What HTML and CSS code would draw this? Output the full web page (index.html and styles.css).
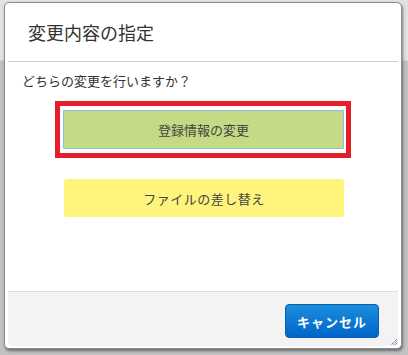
FILE: index.html
```html
<html>

<head>
    <title>変更内容の指定</title>
    <link rel="stylesheet" href="styles.css">
</head>

<body>
    <div class="dialog">
        <div class="dialog-header">
            <h1>変更内容の指定</h1>
        </div>

        <div class="dialog-body">
            <p class="question">どちらの変更を行いますか？</p>
            <div class="highlight">
                <button class="choice choice-info">登録情報の変更</button>
            </div>
            <button class="choice choice-file">ファイルの差し替え</button>
        </div>

        <div class="dialog-footer">
            <button class="btn-cancel">キャンセル</button>
        </div>

        <!-- resize grip -->
        <svg class="grip" width="7" height="7" viewBox="0 0 7 7">
            <path d="M6 0 L0 6 M6 2 L2 6 M6 4 L4 6" stroke="#2d5ea6" stroke-width="1" stroke-dasharray="1 1" />
        </svg>
    </div>
</body>

</html>
```

FILE: styles.css
```css
body {
    margin: 0;
    padding: 2px 0 0 4px;
    height: 355px;
    box-sizing: border-box;
    overflow: hidden;
    background: linear-gradient(#e2e2e2 0, #e2e2e2 60px, #c2c2c2 61px);
    font-family: 'Noto Sans CJK JP', 'Noto Sans', sans-serif;
    color: #333;
}

.dialog {
    position: relative;
    width: 398px;
    height: 347px;
    box-sizing: border-box;
    padding: 0 3px 2px 3px;
    background: #fff;
    border: 1px solid #8c8c8c;
    border-radius: 5px;
    box-shadow: 1px 2px 3px rgba(0, 0, 0, 0.45);
    display: flex;
    flex-direction: column;
}

.dialog-header {
    height: 59px;
    border-bottom: 1px solid #cfcfcf;
    padding: 1px 0 0 20px;
    box-sizing: border-box;
}

.dialog-header h1 {
    margin: 0;
    font-size: 18px;
    font-weight: normal;
    line-height: 57px;
    color: #333;
}

.dialog-body {
    flex: 1;
    display: flex;
    flex-direction: column;
    align-items: flex-start;
}

.question {
    margin: 11px 0 0 14px;
    font-size: 13px;
    line-height: 16px;
}

.highlight {
    margin: 12px 0 0 47px;
    padding: 4px 2px 4px 3px;
    border: 5px solid #e51f2a;
}

.choice {
    display: block;
    font-family: inherit;
    font-size: 13px;
    color: #444;
    cursor: pointer;
}

.choice-info {
    width: 281px;
    height: 39px;
    background: #c5da84;
    border: 1px solid #93b9e4;
    border-radius: 1px;
}

.choice-file {
    margin: 21px 0 0 56px;
    width: 280px;
    height: 38px;
    background: #fff47c;
    border: none;
    border-radius: 3px;
    letter-spacing: 0.5px;
}

.dialog-footer {
    height: 55px;
    box-sizing: border-box;
    background: #f3f3f3;
    border-top: 1px solid #dcdcdc;
    border-radius: 0 0 4px 4px;
    padding: 12px 19px 0 0;
    display: flex;
    justify-content: flex-end;
    align-items: flex-start;
}

.btn-cancel {
    width: 94px;
    height: 34px;
    font-family: inherit;
    font-size: 13px;
    font-weight: bold;
    letter-spacing: 1px;
    color: #fff;
    background: linear-gradient(#1b8fdc, #0064c8);
    border: 1px solid #0a5cb0;
    border-radius: 4px;
    cursor: pointer;
}

.grip {
    position: absolute;
    right: 3px;
    bottom: 2px;
}
```
